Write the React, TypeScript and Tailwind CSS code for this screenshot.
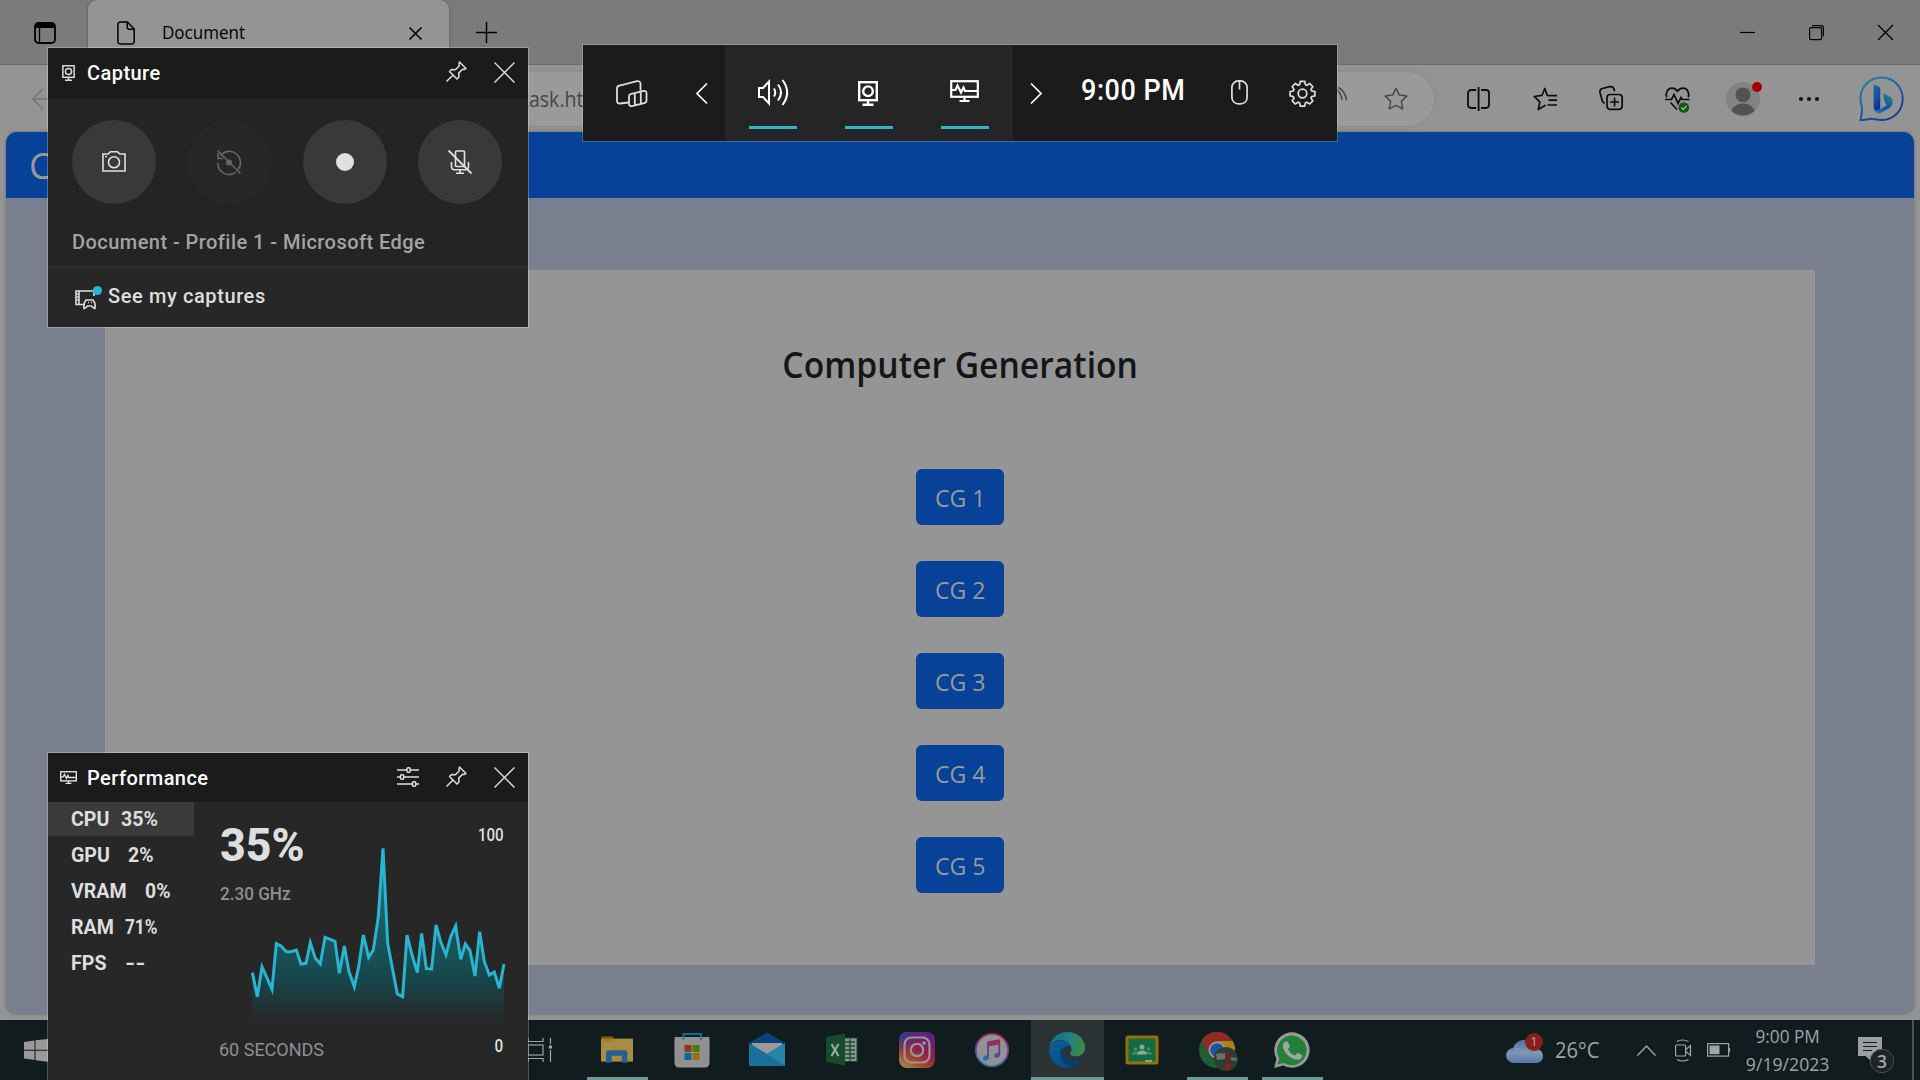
import React from "react";

type IconProps = {
  w: number;
  h: number;
  box?: string;
  sw?: number;
  className?: string;
  children: React.ReactNode;
};

function Icon({ w, h, box, sw = 1.5, className = "", children }: IconProps) {
  return (
    <svg
      width={w}
      height={h}
      viewBox={box ?? `0 0 ${w} ${h}`}
      fill="none"
      stroke="currentColor"
      strokeWidth={sw}
      className={`block shrink-0 overflow-visible ${className}`}
    >
      {children}
    </svg>
  );
}

/* ---------- browser ---------- */

function TabStrip() {
  return (
    <div className="flex h-[65px] items-start bg-[#7b7b7b] text-black">
      <Icon w={22} h={22} sw={1.8} className="mt-[22px] ml-[34px]">
        <rect x="1" y="1" width="20" height="20" rx="3.5" />
        <path d="M1.5 5V4.5a3 3 0 0 1 3-3h13a3 3 0 0 1 3 3V5z" fill="currentColor" />
        <path d="M5.5 6v15" strokeWidth="1.3" />
      </Icon>
      <div className="ml-[32px] flex h-[65px] w-[361px] items-start rounded-t-[9px] bg-[#949494] shadow-[0_0_3px_rgba(0,0,0,0.3)]">
        <Icon w={18} h={24} sw={1.5} className="mt-[21px] ml-[29px]">
          <path d="M3.5 1h7l6.7 7v12.5a2.6 2.6 0 0 1-2.6 2.6H3.5A2.6 2.6 0 0 1 .9 20.500V3.600A2.600 2.600 0 0 1 3.500 1z" />
          <path d="M10.300 1v5.500a1.800 1.800 0 0 0 1.800 1.800h5" />
        </Icon>
        <span className="mt-[19px] ml-[27px] w-[247px] text-[18px] leading-[26px]">
          <span className="inline-block origin-left scale-x-[0.945]">Document</span>
        </span>
        <Icon w={13} h={13} sw={1.6} className="mt-[27px]">
          <path d="M.5.5l12 12M12.500.5l-12 12" />
        </Icon>
      </div>
      <Icon w={21} h={21} sw={1.5} className="mt-[22px] ml-[27px]">
        <path d="M10.500 0v21M0 10.500h21" />
      </Icon>
      <div className="ml-auto flex items-center pt-[25px] pr-[27px]">
        <Icon w={15} h={15} sw={1.2} className="mr-[54px]">
          <path d="M0 7.500h15" />
        </Icon>
        <Icon w={15} h={15} sw={1.2} className="mr-[54px]">
          <rect x=".6" y="2.600" width="12" height="12" rx="1.600" />
          <path d="M3.200.600h8.600a2.600 2.600 0 0 1 2.600 2.600v8" />
        </Icon>
        <Icon w={15} h={15} sw={1.3}>
          <path d="M0 0l15 15M15 0L0 15" />
        </Icon>
      </div>
    </div>
  );
}

function BingLogo() {
  return (
    <Icon w={45} h={46} box="0 0 46 47">
      <defs>
        <linearGradient id="bingRing" x1="0" y1="0" x2="0.6" y2="1">
          <stop offset="0" stopColor="#1c86a4" />
          <stop offset="0.5" stopColor="#1c5fa8" />
          <stop offset="1" stopColor="#123a8c" />
        </linearGradient>
        <linearGradient id="bingStem" x1="0" y1="0" x2="0.3" y2="1">
          <stop offset="0" stopColor="#1b6ba8" />
          <stop offset="0.6" stopColor="#1450a0" />
          <stop offset="1" stopColor="#0f2f94" />
        </linearGradient>
        <linearGradient id="bingBowl" x1="0" y1="1" x2="0.7" y2="0">
          <stop offset="0" stopColor="#1f86b8" />
          <stop offset="0.5" stopColor="#1652a2" />
          <stop offset="1" stopColor="#15878f" />
        </linearGradient>
      </defs>
      <path
        d="M1.500 23.500C1.500 10.500 11 1.500 23 1.500s21.700 9.500 21.700 21.800S35.500 45 23.200 45c-4.500 0-7-1-9.500-1.200-4-.3-7.700 1.400-12.200 1.300 1.500-6.500 2-9.500 1.400-13.500-.6-2.800-1.400-4.600-1.400-8.100z"
        stroke="url(#bingRing)"
        strokeWidth="2"
      />
      <path d="M15 8.500l5.200 2.200c1 .5 1.500 1.200 1.500 2.300v21l-3.300 1.500c-2 .3-3.400-1.200-3.400-3.200z" fill="url(#bingStem)" stroke="none" />
      <path
        d="M24.800 17.800l6.400 2.900c2.400 1.200 3.500 3.300 3.200 6.100-.2 3-1.500 5-4 6.500l-7.600 4.300c-3 1.600-6.500.2-7.500-3.300 1.800 1.200 3.600 1 5.200.1l7.400-4.300-1.800-4.500c-.6-1.600-1.200-5.500-1.300-7.800z"
        fill="url(#bingBowl)"
        stroke="none"
      />
    </Icon>
  );
}

function Toolbar() {
  return (
    <div className="flex h-[67px] items-center bg-[#949494] text-[#0c0c0c] shadow-[0_-1px_0_#6c6c6c]">
      <Icon w={22} h={22} sw={1.5} className="ml-[32px] text-[#777]">
        <path d="M11 .5L1 11l10 10.500M1 11h21" />
      </Icon>
      <div className="ml-[66px] flex h-[54px] w-[1314px] items-center rounded-full bg-[#9a9a9a] text-[#474747] shadow-[0_0_6px_rgba(0,0,0,0.08)]">
        <span className="ml-[402px] w-[811px] text-[21px] leading-[30px]">
          <span className="inline-block origin-left scale-x-[0.93]">task.html</span>
        </span>
        <Icon w={16} h={22} sw={1.5} className="-mt-px mr-[35px]">
          <path d="M3.500 21.500L-3 2M4 3c3 2.500 4.500 6 5 10M5.500.5c5 3 7.500 7.500 8 13" />
        </Icon>
        <Icon w={24} h={23} sw={1.5}>
          <path
            d="M12 1.200l3.300 6.900 7.500 1-5.500 5.300 1.400 7.500L12 18.300l-6.700 3.600 1.400-7.500L1.200 9.100l7.500-1z"
            strokeLinejoin="round"
          />
        </Icon>
      </div>
      <Icon w={23} h={24} sw={1.8} className="ml-[33px]">
        <path d="M9.200 3H4.200A3.200 3.200 0 0 0 1 6.200v11.600A3.200 3.200 0 0 0 4.200 21h5M14 3h4.800A3.200 3.200 0 0 1 22 6.200v11.600a3.200 3.200 0 0 1-3.200 3.200H14M11.600 0v24" />
      </Icon>
      <Icon w={24} h={24} sw={1.7} className="ml-[43px]">
        <path d="M14.200 8.300L11.800 1.500 9 8.300l-7.800 1.200 5.600 5.300-1.500 7.700 6.700-4" strokeLinejoin="round" strokeLinecap="round" />
        <path d="M14.500 8.700H24M15.500 13.200H24M14.500 18H24" />
      </Icon>
      <Icon w={24} h={24} sw={1.7} className="-mt-px ml-[42px]">
        <rect x="8" y="8.500" width="15.200" height="14.800" rx="3.200" />
        <path d="M15.600 11.500v9M11 16h9M5.500 17.500C3 16 3 14 2.600 12.500L1 6.500C.5 4.300 1.500 3 3.300 2.500l7.500-1.800c2-.4 3.500.3 4.200 2.300l.6 2.200" />
      </Icon>
      <Icon w={25} h={25} sw={1.7} className="mt-px ml-[42px]">
        <path d="M1.600 10.200C.2 5.500 3 1.200 7 1.200c2.500 0 4.200 1.200 5.500 3 1.300-1.800 3-3 5.500-3 4 0 6.800 4.300 5.400 9" />
        <path d="M0 12.500h6.500l2.500-5 4 9 3-6 1.200 2H24.500M5.500 15.500l6.500 7" />
        <circle cx="18.800" cy="20.500" r="5.300" fill="#0b5a10" stroke="none" />
        <path d="M16.300 20.600l1.900 1.900 3.300-3.600" stroke="#a5b5a5" strokeWidth="1.400" />
      </Icon>
      <div className="relative ml-[36px]">
        <Icon w={34} h={34}>
          <clipPath id="avatarClip">
            <circle cx="17" cy="17" r="16.500" />
          </clipPath>
          <circle cx="17" cy="17" r="17" fill="#838280" stroke="none" />
          <g clipPath="url(#avatarClip)" fill="#535251" stroke="none">
            <circle cx="17" cy="12.800" r="7.400" />
            <ellipse cx="17" cy="33" rx="12.500" ry="11.500" />
          </g>
        </Icon>
        <span className="absolute top-0 left-[26px] h-[10px] w-[10px] rounded-full bg-[#a50000]" />
      </div>
      <div className="ml-[39px] flex gap-1">
        <i className="h-1 w-1 rounded-full bg-[#111]" />
        <i className="h-1 w-1 rounded-full bg-[#111]" />
        <i className="h-1 w-1 rounded-full bg-[#111]" />
      </div>
      <div className="mt-px ml-[40px]">
        <BingLogo />
      </div>
    </div>
  );
}

function WebPage() {
  const items = ["CG 1", "CG 2", "CG 3", "CG 4", "CG 5"];
  return (
    <div className="h-[888px] bg-[#949494] px-1.5 pb-1.5">
      <div className="flex h-[882px] flex-col overflow-hidden rounded-[11px] bg-[#797f8e] shadow-[0_0_3px_rgba(0,0,0,0.35)]">
        <div className="flex h-[66px] shrink-0 items-center bg-[#084298] pt-[2px] pl-[23px] text-[36px] leading-none text-[#999]">
          Computer
        </div>
        <div className="mx-[99px] mt-[72px] flex h-[695px] flex-col items-center bg-[#959595]">
          <h1 className="mt-[70px] text-[36px] leading-[50px] font-semibold whitespace-nowrap text-[#14171a]">
            <span className="inline-block scale-x-[0.935]">Computer Generation</span>
          </h1>
          <div className="mt-[79px] flex flex-col gap-[36px]">
            {items.map((label) => (
              <button
                key={label}
                className="flex h-[56px] w-[88px] items-center justify-center rounded-[6px] bg-[#084298] pt-px text-[24px] text-[#999]"
              >
                <span className="inline-block scale-x-[0.96]">{label}</span>
              </button>
            ))}
          </div>
        </div>
      </div>
    </div>
  );
}

/* ---------- taskbar ---------- */

function ExplorerIcon() {
  return (
    <Icon w={36} h={36}>
      <g stroke="none">
        <path d="M2 6.500c0-1.200.8-2 2-2h9.500l3 3.500-2 4H2z" fill="#8a5a00" />
        <rect x="2" y="6.800" width="32" height="22.500" rx="1" fill="#a08136" />
        <path d="M2 29.500V10h12l2.500-3.200H34v22.700z" fill="#a98c42" />
        <path d="M7 30.800V21c0-1.700 1-2.700 2.700-2.700h16c1.700 0 2.700 1 2.700 2.700v9.800h-5.700v-7h-10v7z" fill="#265f95" />
      </g>
    </Icon>
  );
}

function StoreIcon() {
  return (
    <Icon w={36} h={36}>
      <path d="M9.500 9V2h17.500v7" stroke="#14698e" strokeWidth="2" />
      <path d="M.5 5h35v26a4.500 4.500 0 0 1-4.500 4.500H5A4.500 4.500 0 0 1 .5 31z" fill="#919191" stroke="none" />
      <path d="M9.500 5.500V7.500M27 5.500V7.500" stroke="#14698e" strokeWidth="2" />
      <g stroke="none">
        <rect x="10.500" y="13" width="7" height="7" fill="#94351a" />
        <rect x="18.500" y="13" width="7" height="7" fill="#4c7a12" />
        <rect x="10.500" y="21" width="7" height="7" fill="#066a96" />
        <rect x="18.500" y="21" width="7" height="7" fill="#98730a" />
      </g>
    </Icon>
  );
}

function MailIcon() {
  return (
    <Icon w={36} h={36}>
      <g stroke="none">
        <path d="M0 11L18 .5 36 11v6H0z" fill="#0a437c" />
        <path d="M3 11h30v6L18 24 3 17z" fill="#9a9a9a" />
        <path d="M0 11l18 11L36 11v23H0z" fill="#1c7d9f" />
        <path d="M0 11l36 23H0z" fill="#1a6f9a" />
        <path d="M18 22L36 11v23z" fill="#2585a6" />
      </g>
    </Icon>
  );
}

function ExcelIcon() {
  return (
    <Icon w={36} h={36}>
      <rect x="18" y="6" width="15" height="23.500" fill="#8d9690" stroke="#1b4b2e" strokeWidth="1" />
      <path d="M21 10h10M21 14h10M21 18h10M21 22h10M21 26h10M26 7v22" stroke="#1b4b2e" strokeWidth="1.300" />
      <path d="M2 5l19-3.500v32L2 30z" fill="#154d2b" stroke="none" />
      <path d="M7.500 12l7 12M14.500 12l-7 12" stroke="#9aa89f" strokeWidth="2.200" />
    </Icon>
  );
}

function InstagramIcon() {
  return (
    <Icon w={36} h={36}>
      <defs>
        <linearGradient id="igBase" x1="0.1" y1="1" x2="0.7" y2="0">
          <stop offset="0" stopColor="#a98d4a" />
          <stop offset="0.3" stopColor="#a0472a" />
          <stop offset="0.6" stopColor="#8d1f50" />
          <stop offset="1" stopColor="#5c2385" />
        </linearGradient>
        <radialGradient id="igBlue" cx="0.05" cy="0" r="0.6">
          <stop offset="0" stopColor="#2f3a94" />
          <stop offset="1" stopColor="#2f3a94" stopOpacity="0" />
        </radialGradient>
      </defs>
      <rect width="36" height="36" rx="8" fill="url(#igBase)" stroke="none" />
      <rect width="36" height="36" rx="8" fill="url(#igBlue)" stroke="none" />
      <g stroke="#9c9499" strokeWidth="2.200">
        <rect x="5.500" y="5.500" width="25" height="25" rx="7" />
        <circle cx="18" cy="18" r="6.200" />
      </g>
      <circle cx="25" cy="11" r="1.800" fill="#9c9499" stroke="none" />
    </Icon>
  );
}

function ItunesIcon() {
  return (
    <Icon w={36} h={36}>
      <defs>
        <linearGradient id="itRing" x1="0.6" y1="0" x2="0.4" y2="1">
          <stop offset="0" stopColor="#9e2e48" />
          <stop offset="0.5" stopColor="#6d3a95" />
          <stop offset="1" stopColor="#2a84a4" />
        </linearGradient>
        <linearGradient id="itNote" x1="0.6" y1="0" x2="0.4" y2="1">
          <stop offset="0" stopColor="#a02c45" />
          <stop offset="0.5" stopColor="#6b3a98" />
          <stop offset="1" stopColor="#2a6da8" />
        </linearGradient>
      </defs>
      <circle cx="18" cy="18" r="16.200" fill="#939195" stroke="url(#itRing)" strokeWidth="1.800" />
      <path
        d="M13.300 9.500l12-2.300c.6-.1.900.2.900.8v14.500c0 2-1.500 3.200-3.200 3.400-1.600.2-2.800-.7-2.800-2.200 0-1.800 1.500-2.500 3-2.800.8-.2 1.100-.4 1.100-1.200V12.500l-9.300 1.800v10.900c0 2-1.600 3.200-3.200 3.400-1.600.2-2.900-.7-2.900-2.200 0-1.700 1.400-2.500 3-2.800.8-.2 1.200-.4 1.200-1.200V10.500c0-.6.100-.9.200-1z"
        fill="url(#itNote)"
        stroke="none"
      />
    </Icon>
  );
}

function EdgeIcon() {
  return (
    <Icon w={36} h={36}>
      <defs>
        <linearGradient id="edgeTop" x1="0" y1="0.5" x2="1" y2="0.7">
          <stop offset="0" stopColor="#176d94" />
          <stop offset="0.5" stopColor="#237f84" />
          <stop offset="1" stopColor="#3f8c3a" />
        </linearGradient>
        <linearGradient id="edgeLeft" x1="0" y1="0" x2="0.6" y2="1">
          <stop offset="0" stopColor="#0d619c" />
          <stop offset="1" stopColor="#0a4a80" />
        </linearGradient>
      </defs>
      <g stroke="none">
        <path d="M.3 16C1.500 6.500 9 0 18.300 0 29 0 36 7.500 36 15.500c0 5.500-4 8.800-8.800 8.800-3.500 0-6.200-1.200-6.200-2.800 0-1 1.500-1.500 1.500-4.300C22.500 12 17.500 8 11.500 8 6 8 2 11.500.3 16z" fill="url(#edgeTop)" />
        <path d="M0 18C.8 12.500 5.500 8.500 11.500 8.500c5.500 0 9.500 2.800 10.600 6.300-4-2.200-8.600.6-8.600 6.200 0 7 6 14 13 12.500C24 35.200 21 36 18 36 8 36 0 28 0 18z" fill="url(#edgeLeft)" />
        <path d="M12 17c-2.500 7.500 3.500 19 14 17 3.300-1.800 5.500-4 6.800-6.800.3-.7-.3-1-.8-.7-6.500 3.200-16.500 1-18-6.500-.2-1.200-.1-2.500.5-4z" fill="#0a3b70" />
      </g>
    </Icon>
  );
}

function ClassroomIcon() {
  return (
    <Icon w={36} h={36}>
      <rect x="3" y="5" width="30" height="26" rx="1" fill="#126b42" stroke="#98700a" strokeWidth="3" />
      <g stroke="none" fill="#8fa899">
        <circle cx="18" cy="15" r="2.500" />
        <path d="M12.500 22.500c0-3 3-4 5.500-4s5.500 1 5.500 4z" />
        <rect x="21" y="28" width="7" height="1.800" />
      </g>
      <g stroke="none" fill="#4f8c6c">
        <circle cx="11.500" cy="17" r="1.800" />
        <circle cx="24.500" cy="17" r="1.800" />
        <path d="M8 22.500c0-2 2-3 4.500-2.500l-1 2.500zM28 22.500c0-2-2-3-4.500-2.500l1 2.500z" />
      </g>
    </Icon>
  );
}

function ChromeIcon() {
  return (
    <Icon w={36} h={36}>
      <g stroke="none">
        <circle cx="18" cy="18" r="18" fill="#1a6032" />
        <path d="M2.400 9A18 18 0 0 1 33.600 9H18L10 22.500z" fill="#912a22" />
        <path d="M33.600 9A18 18 0 0 1 18 36l8-13.500L18 9z" fill="#a8841a" />
        <circle cx="18" cy="18" r="8.500" fill="#9a9a9a" />
        <circle cx="18" cy="18" r="6.800" fill="#21529c" />
        <circle cx="27" cy="27" r="12" fill="#2b3f31" />
        <path d="M17 22c4-2 8 1 10-2l2 5 9 1-1 3-10-2-9 1z" fill="#66756a" />
        <path d="M26 19h5l1 8-2 4 1 7-5-1z" fill="#5d2a2c" />
        <circle cx="29" cy="35" r="3" fill="#8c1e2c" />
      </g>
    </Icon>
  );
}

function WhatsappIcon() {
  return (
    <Icon w={36} h={36}>
      <g stroke="none">
        <path d="M0 36l2.500-9.300A17.700 17.700 0 1 1 9.300 33.500z" fill="#999" />
        <path d="M3.600 32.500l1.700-6.300a14.800 14.800 0 1 1 4.700 4.700z" fill="#23803a" />
        <path d="M12.900 9.500c.8 0 1 .2 1.300.9l1.500 3.600c.2.500 0 1-.3 1.400l-1.500 1.900c1.600 3 3.800 5 7 6.300l1.900-2.200c.4-.5.8-.6 1.400-.3l3.300 1.600c.5.300.7.500.6 1.200-.3 2.600-2.600 4-5 3.900C16.500 27.300 9 20 8.800 14c0-2.500 1.700-4.500 4.100-4.500z" fill="#a0a5a1" />
      </g>
    </Icon>
  );
}

const apps: { icon: React.ReactNode; state: "idle" | "open" | "active" }[] = [
  { icon: <ExplorerIcon />, state: "open" },
  { icon: <StoreIcon />, state: "idle" },
  { icon: <MailIcon />, state: "idle" },
  { icon: <ExcelIcon />, state: "idle" },
  { icon: <InstagramIcon />, state: "idle" },
  { icon: <ItunesIcon />, state: "idle" },
  { icon: <EdgeIcon />, state: "active" },
  { icon: <ClassroomIcon />, state: "idle" },
  { icon: <ChromeIcon />, state: "open" },
  { icon: <WhatsappIcon />, state: "open" },
];

const cellStyle = { idle: "", open: "", active: "bg-[#2b3335]" };
const lineStyle = { idle: "w-0", open: "w-[61px]", active: "w-[73px]" };

function Taskbar() {
  return (
    <div className="flex h-[60px] items-center bg-[#111c1e] text-[#a0a4a5]">
      <Icon w={34} h={25} className="ml-[24px] text-[#999]">
        <path d="M0 4l10.500-1.500v9.300H0zM11.500 2.300L34 0v11.800H11.500zM0 12.800h10.500V22L0 20.500zM11.500 12.800H34V25l-22.500-2.800z" fill="currentColor" stroke="none" />
      </Icon>
      <Icon w={26} h={24} sw={1.2} className="-mt-px ml-[468px]">
        <path d="M2 0v3.500h15V0M2 24v-3.500h15V24M24.500 0v6M24.500 12v12" />
        <rect x="2" y="7" width="15" height="10" />
        <rect x="23.500" y="8" width="2" height="2" fill="currentColor" />
      </Icon>
      <div className="ml-[29px] flex gap-[2px]">
        {apps.map((app, i) => (
          <div key={i} className={`flex h-[60px] w-[73px] flex-col items-center ${cellStyle[app.state]}`}>
            <div className="mt-3 -ml-px">{app.icon}</div>
            <div className={`mt-auto h-[3px] bg-[#6b9a9b] ${lineStyle[app.state]}`} />
          </div>
        ))}
      </div>
      <div className="relative ml-[177px]">
        <Icon w={38} h={26} className="mt-px">
          <defs>
            <linearGradient id="cloud" x1="0" y1="0" x2="0" y2="1">
              <stop offset="0" stopColor="#4c6fa5" />
              <stop offset="0.55" stopColor="#8195b5" />
              <stop offset="1" stopColor="#5577ad" />
            </linearGradient>
          </defs>
          <path d="M8 25a7.500 7.500 0 0 1-.8-15C9 4.500 13.500 2 18.500 2c6 0 9.500 4 10 9 5.500-.5 8.500 3 8.500 7 0 4.500-3 7-7.500 7z" fill="url(#cloud)" stroke="none" />
          <path d="M8 10.500c4-.8 7 .5 9 3.500 3-3.500 8-4.500 12-2" stroke="#9aa8bf" strokeWidth="1" opacity=".5" />
        </Icon>
        <span className="absolute -top-[4px] left-[19px] flex h-[18px] w-[18px] items-center justify-center rounded-full bg-[#8a1f1a] text-[13px] leading-none text-[#b5a5a5]">
          1
        </span>
      </div>
      <span className="mt-[2px] ml-[11px] w-[82px] text-[21px]">
        <span className="inline-block origin-left scale-x-[0.96]">26°C</span>
      </span>
      <Icon w={19} h={11} sw={1.4}>
        <path d="M.5 10.500l9-9.500 9 9.500" />
      </Icon>
      <Icon w={17} h={23} sw={1.2} className="ml-[19px]">
        <rect x=".6" y="6" width="10" height="11" rx="1" />
        <path d="M11 10.500l4.500-4v10l-4.500-4M2 2.500C5 .8 10 .8 13.500 2.500M2 20.500c3 1.700 8 1.700 11.500 0" />
      </Icon>
      <Icon w={24} h={14} sw={1.2} className="ml-[15px]">
        <rect x=".6" y=".6" width="21" height="12.500" />
        <rect x="2.500" y="2.500" width="10" height="8.700" fill="currentColor" stroke="none" />
        <path d="M22.500 5v4" />
      </Icon>
      <div className="ml-[12px] flex w-[90px] flex-col items-center text-[18px] leading-[28px] whitespace-nowrap">
        <span className="inline-block scale-x-[0.955]">9:00 PM</span>
        <span className="inline-block scale-x-[0.98]">9/19/2023</span>
      </div>
      <div className="relative ml-[25px]">
        <Icon w={36} h={36} className="mt-[10px]">
          <path d="M0 0h24v19H13v5l-5.500-5H0z" fill="#9c9f9f" stroke="none" />
          <path d="M5 5.500h14M5 9.500h14M5 13.500h9" stroke="#111c1e" strokeWidth="1.200" />
          <circle cx="24" cy="24" r="11.700" fill="#1e2425" stroke="#4b5152" strokeWidth="1" />
        </Icon>
        <span className="absolute top-[22px] left-[12px] w-6 text-center text-[18px] leading-6 font-semibold">3</span>
      </div>
      <div className="ml-auto h-[60px] w-2 border-l-2 border-[#4a5253]" />
    </div>
  );
}

/* ---------- game bar ---------- */

const closeIcon = (
  <Icon w={21} h={21} sw={1.4}>
    <path d="M.5.5l20 20M20.500.5l-20 20" />
  </Icon>
);

const pinIcon = (
  <Icon w={21} h={21} sw={1.5} className="-mt-[3px]">
    <path d="M13.500 1l6.500 6.500-2 1-1.500-.2-3.800 3.800.3 3.900-2 2L3.500 10.500l2-2 3.900.3 3.800-3.800-.2-2zM7 14L.5 20.500" strokeLinejoin="round" />
  </Icon>
);

function MonitorPulse({ w, h, sw }: { w: number; h: number; sw: number }) {
  return (
    <Icon w={w} h={h} box="0 0 29 22" sw={sw}>
      <rect x="1.200" y="1.200" width="26.600" height="15.600" />
      <path d="M1 10h4.500l2-4.500 3.500 7 2.500-5 1.500 3.500H27M14.500 17v4M9.500 21h10" />
    </Icon>
  );
}

function ScreenRecord({ w, h, sw }: { w: number; h: number; sw: number }) {
  return (
    <Icon w={w} h={h} box="0 0 20 25" sw={sw}>
      <rect x="1.200" y="1.200" width="17.600" height="18" />
      <circle cx="10" cy="10.200" r="4.800" />
      <path d="M10 19v4.500M4.500 23.800h11" />
    </Icon>
  );
}

function TopBar() {
  return (
    <div className="absolute top-[45px] left-[583px] flex h-[96px] w-[754px] bg-[#1b1b1b] font-[Roboto] text-white shadow-[0_0_0_1px_rgba(255,255,255,0.2)]">
      <div className="flex w-[142px] items-center pl-[33px]">
        <Icon w={32} h={27} sw={1.8} className="text-[#ddd]">
          <path d="M12.500 22.500L4 23.500c-1.800.2-3-.7-3-2.500V8.500c0-1.800.8-2.700 2.500-3L21 1.200c2-.4 3.500.7 3.500 2.500v7" />
          <path d="M14.500 14.200L27.500 11c1.800-.4 3 .5 3 2v7.500c0 1.500-.7 2.300-2.300 2.700L16 26c-1.800.3-3-.6-3-2v-7.500c0-1.200.5-2 1.500-2.300zM18.800 13.500V25M24.800 12v11.800" />
        </Icon>
        <Icon w={12} h={21} sw={1.7} className="ml-[48px]">
          <path d="M11 .5L1 10.500l10 10" />
        </Icon>
      </div>
      <div className="flex w-[288px] bg-[#252525]">
        <div className="ml-[24px] flex w-12 flex-col items-center pt-[34px]">
          <Icon w={31} h={27} sw={2}>
            <path d="M1 9h4l6-6.500v22L5 18H1z" />
            <path d="M16 9.500c1.500 2.500 1.500 5.500 0 8M20 5.500c3.800 5 3.800 11 0 16M24.500 1c6 8 6 17 0 25" />
          </Icon>
          <i className="mt-auto mb-[12px] h-[3px] w-12 bg-[#27b5cf]" />
        </div>
        <div className="ml-[48px] flex w-12 flex-col items-center pt-[36px]">
          <div className="mr-[2px]">
            <ScreenRecord w={20} h={25} sw={2.400} />
          </div>
          <i className="mt-auto mb-[12px] h-[3px] w-12 bg-[#27b5cf]" />
        </div>
        <div className="ml-[48px] flex w-12 flex-col items-center pt-[35px]">
          <div className="mr-[2px]">
            <MonitorPulse w={29} h={22} sw={2.200} />
          </div>
          <i className="mt-auto mb-[12px] h-[3px] w-12 bg-[#27b5cf]" />
        </div>
      </div>
      <div className="flex flex-1 items-center">
        <Icon w={12} h={21} sw={1.7} className="ml-[17px]">
          <path d="M1 .5l10 10-10 10" />
        </Icon>
        <span className="mb-[7px] ml-[39px] w-[150px] text-[29px] leading-[40px] font-medium">
          <span className="inline-block origin-left scale-x-[0.93] tracking-[0.6px]">9:00 PM</span>
        </span>
        <Icon w={17} h={25} sw={1.7} className="-mt-[2px] text-[#ddd]">
          <rect x=".9" y=".9" width="15.200" height="23" rx="6.500" />
          <path d="M8.500 1v8.500" />
        </Icon>
        <Icon w={25} h={25} sw={1.7} className="ml-[42px] text-[#ddd]">
          <path
            d="M10.300 1h4.400l.7 3.300 1.500.6 2.800-1.800 3.100 3.100-1.800 2.800.6 1.400 3.300.8v4.300l-3.300.8-.6 1.400 1.800 2.800-3.100 3.100-2.800-1.800-1.500.6-.7 3.300h-4.400l-.7-3.300-1.500-.6-2.800 1.800-3.100-3.100 1.800-2.800-.6-1.400L.1 15.500v-4.300l3.300-.8.6-1.400-1.800-2.800 3.100-3.100 2.800 1.800 1.500-.6z"
            transform="translate(0 -.6)"
          />
          <circle cx="12.500" cy="12.500" r="4.300" />
        </Icon>
      </div>
    </div>
  );
}

function RoundButton({ dim, children }: { dim?: boolean; children: React.ReactNode }) {
  return (
    <div
      className={
        dim
          ? "flex h-[84px] w-[84px] items-center justify-center rounded-full bg-[#272727] text-[#666]"
          : "flex h-[84px] w-[84px] items-center justify-center rounded-full bg-[#393939] text-[#e0e0e0]"
      }
    >
      {children}
    </div>
  );
}

function CaptureWidget() {
  return (
    <div className="absolute top-[48px] left-[48px] flex h-[279px] w-[480px] flex-col bg-[#242424] font-[Roboto] text-[#dedede] shadow-[0_0_0_1px_rgba(255,255,255,0.25)]">
      <div className="flex h-[50px] items-center border-b border-[#181818] bg-[#1b1b1b] pr-[13px] pl-[14px]">
        <ScreenRecord w={13} h={16} sw={2.300} />
        <span className="ml-[12px] text-[20px] font-medium text-white">
          <span className="inline-block origin-left tracking-[0.450px]">Capture</span>
        </span>
        <div className="ml-auto flex items-center gap-[27px]">
          {pinIcon}
          {closeIcon}
        </div>
      </div>
      <div className="mt-[22px] flex justify-between pr-[26px] pl-[24px]">
        <RoundButton>
          <Icon w={24} h={21} sw={1.6} className="-mt-[2px]">
            <path d="M1 3h5l2.500-2.200h7L18 3h5v17H1z" />
            <circle cx="12" cy="11.300" r="5.500" />
            <path d="M3 5.500h2" />
          </Icon>
        </RoundButton>
        <RoundButton dim>
          <Icon w={24} h={24} sw={1.6}>
            <path d="M3.500 5.500A11 11 0 0 1 21 19.500M19 22A11 11 0 0 1 1 13M1 3v5.500h5" />
            <circle cx="12" cy="12.500" r="3" fill="currentColor" stroke="none" />
            <path d="M.5.5l23 23" />
          </Icon>
        </RoundButton>
        <RoundButton>
          <i className="h-[18px] w-[18px] rounded-full bg-[#e0e0e0]" />
        </RoundButton>
        <RoundButton>
          <Icon w={24} h={24} sw={1.6}>
            <rect x="7.500" y="1" width="9" height="15.500" rx="1" />
            <path d="M3.500 12v4.500c0 2.200 1.200 3.300 3.300 3.300h10.400c2.100 0 3.300-1.100 3.300-3.300V12M12 20v3M8 23.300h8" />
            <path d="M.5.5l23 23" strokeWidth="1.800" />
          </Icon>
        </RoundButton>
      </div>
      <span className="mt-[26px] ml-[24px] text-[20px] leading-[24px] font-medium whitespace-nowrap text-[#a3a3a3]">
        <span className="inline-block origin-left tracking-[0.450px]">Document - Profile 1 - Microsoft Edge</span>
      </span>
      <div className="mt-auto flex h-[61px] items-center border-t-2 border-[#303030] bg-[#272727] pl-[27px]">
        <Icon w={26} h={24} sw={1.6}>
          <path d="M19 10V5M10 18.500H1V5h17M4 5v13" />
          <path d="M3.500 8h-2M3.500 11h-2M3.500 14h-2" />
          <path d="M9 22.500c-.5-3 .5-6.500 2-8.500h7c1.500 2 2.500 5.500 2 8.500-1.500.5-2.500-2-3.500-2.500h-4c-1 .5-2 3-3.500 2.500zM13 16.500h1M16 16.500h1" />
          <circle cx="22.500" cy="4.500" r="4.500" fill="#27b5cf" stroke="none" />
        </Icon>
        <span className="mb-1 ml-[7px] text-[20px] font-medium">
          <span className="inline-block origin-left tracking-[0.600px]">See my captures</span>
        </span>
      </div>
    </div>
  );
}

const samples: [number, number][] = [
  [127, 458], [142, 530], [156, 440], [186, 508], [199, 371], [213, 378], [229, 395], [243, 395],
  [259, 390], [273, 432], [288, 430], [301, 368], [316, 415], [331, 432], [345, 352], [375, 364],
  [388, 460], [403, 378], [417, 455], [433, 500], [446, 440], [460, 345], [476, 412], [490, 390],
  [505, 290], [519, 85], [533, 370], [562, 522], [578, 530], [591, 345], [606, 405], [622, 458],
  [635, 340], [649, 446], [665, 447], [678, 315], [692, 365], [708, 405], [722, 350], [737, 318],
  [752, 418], [766, 372], [780, 392], [795, 468], [809, 335], [823, 425], [838, 465], [853, 456],
  [868, 505], [882, 432],
];

const metrics: { name: string; value: string; gap: string; active?: boolean }[] = [
  { name: "CPU", value: "35%", gap: "w-[50px]", active: true },
  { name: "GPU", value: "2%", gap: "w-[57px]" },
  { name: "VRAM", value: "0%", gap: "w-[74px]" },
  { name: "RAM", value: "71%", gap: "w-[54px]" },
  { name: "FPS", value: "--", gap: "w-[54px]" },
];

const valueScale: Record<string, string> = {
  CPU: "scale-x-[0.98]",
  GPU: "scale-x-[0.97]",
  VRAM: "scale-x-[0.97]",
  RAM: "scale-x-[0.86]",
  FPS: "scale-x-[1.3]",
};

function PerformanceWidget() {
  const line = samples.map((p) => p.join(",")).join(" ");
  return (
    <div className="absolute top-[753px] left-[48px] flex h-[327px] w-[480px] flex-col bg-[#272727] font-[Roboto] text-[#dedede] shadow-[0_0_0_1px_rgba(255,255,255,0.25)]">
      <div className="flex h-[49px] shrink-0 items-center bg-[#1b1b1b] pr-[13px] pl-[12px]">
        <MonitorPulse w={17} h={13} sw={2.400} />
        <span className="ml-[10px] text-[20px] font-medium text-white">
          <span className="inline-block origin-left tracking-[0.450px]">Performance</span>
        </span>
        <div className="ml-auto flex items-center gap-[27px]">
          <Icon w={22} h={20} sw={1.5} className="-mt-px">
            <path d="M0 3h10M13 3h9M0 10h3M7 10h15M0 17h15M19 17h3" />
            <rect x="10" y=".8" width="3.200" height="4.500" rx="1" />
            <rect x="3.500" y="7.800" width="3.200" height="4.500" rx="1" />
            <rect x="15.500" y="14.800" width="3.200" height="4.500" rx="1" />
          </Icon>
          {pinIcon}
          {closeIcon}
        </div>
      </div>
      <div className="flex flex-1">
        <div className="w-[146px] text-[20px] font-bold">
          {metrics.map((m) => (
            <div
              key={m.name}
              className={
                m.active
                  ? "mb-px flex h-[34px] items-center bg-[#3a3a3a] pl-[23px]"
                  : "flex h-[36px] items-center pl-[23px]"
              }
            >
              <span className={`shrink-0 ${m.gap}`}>
                <span className="inline-block origin-left scale-x-[0.98]">{m.name}</span>
              </span>
              <span className={`inline-block origin-left ${valueScale[m.name]}`}>{m.value}</span>
            </div>
          ))}
        </div>
        <div className="relative flex flex-1 flex-col pl-[26px] text-[18px] leading-[24px]">
          <svg className="absolute top-[18px] left-[16px] block overflow-visible" width="310" height="220" viewBox="0 0 930 660">
            <defs>
              <linearGradient id="loadFill" gradientUnits="userSpaceOnUse" x1="0" y1="85" x2="0" y2="605">
                <stop offset="0" stopColor="#2a7480" />
                <stop offset="0.4" stopColor="#1c5d66" />
                <stop offset="0.74" stopColor="#16484d" />
                <stop offset="0.9" stopColor="#213437" />
                <stop offset="1" stopColor="#272727" />
              </linearGradient>
            </defs>
            <polygon points={`${line} 882,605 127,605`} fill="url(#loadFill)" />
            <polyline points={line} fill="none" stroke="#27b5cf" strokeWidth="9" />
          </svg>
          <div className="flex items-start">
            <span className="mt-[15px] w-[200px] text-[47px] leading-[56px] font-extrabold">
              <span className="inline-block origin-left scale-x-[0.95]">35%</span>
            </span>
            <span className="mt-[21px] mr-[24px] ml-auto font-medium">
              <span className="inline-block origin-right scale-x-[0.84]">100</span>
            </span>
          </div>
          <span className="mt-[9px] text-[18px] font-medium text-[#8f8f8f]">
            <span className="inline-block origin-left scale-x-[0.95]">2.30 GHz</span>
          </span>
          <div className="mt-auto mb-[17px] flex -translate-y-[5px] justify-between pr-[25px]">
            <span className="-ml-px translate-y-1 text-[#8f8f8f]">
              <span className="inline-block origin-left">60 SECONDS</span>
            </span>
            <span className="inline-block origin-right scale-x-[0.85] font-medium">0</span>
          </div>
        </div>
      </div>
    </div>
  );
}

export default function App() {
  return (
    <div className="relative h-[1080px] w-[1920px] overflow-hidden font-['Open_Sans',sans-serif]">
      <TabStrip />
      <Toolbar />
      <WebPage />
      <Taskbar />
      <CaptureWidget />
      <TopBar />
      <PerformanceWidget />
    </div>
  );
}
